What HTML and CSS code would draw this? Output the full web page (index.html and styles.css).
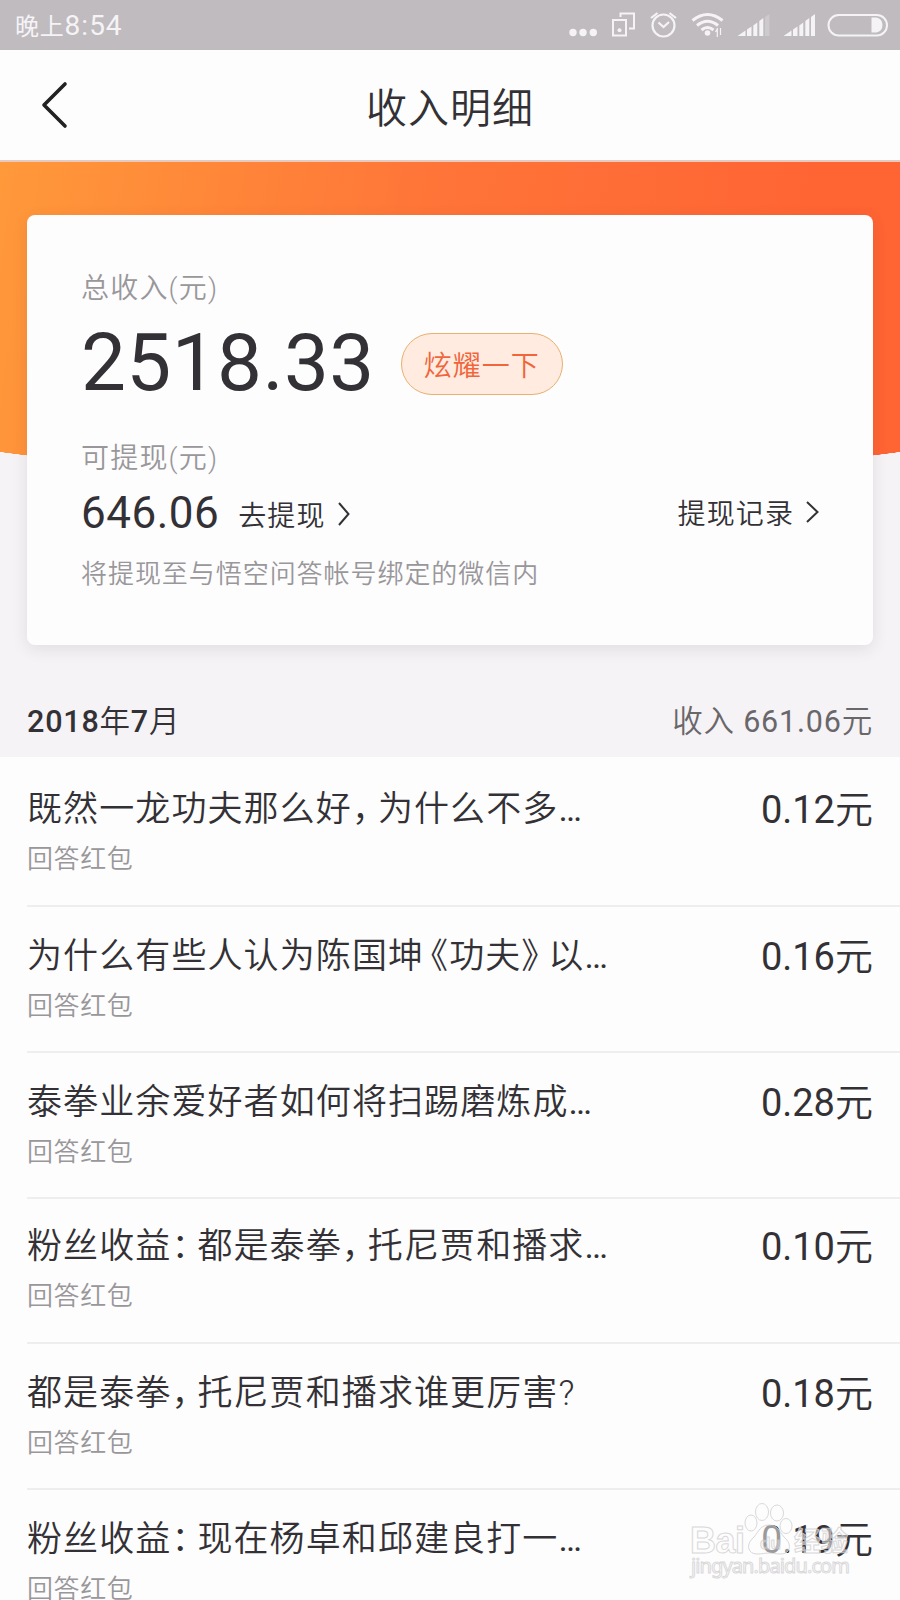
FILE: index.html
```html
<!DOCTYPE html>
<html lang="zh-CN">
<head>
    <meta charset="UTF-8">
    <meta name="viewport" content="width=device-width, initial-scale=1.0">
    <title>收入明细</title>
    <link rel="stylesheet" href="styles.css">
</head>
<body>
    <div class="status-bar">
        <div class="time">晚上<span>8:54</span></div>
        <svg class="status-icons" width="350" height="50" viewBox="0 0 350 50" fill="none" stroke="#f6f3f6">
            <g fill="#f6f3f6" stroke="none">
                <circle cx="23" cy="32.500" r="3.700"/>
                <circle cx="33" cy="32.500" r="3.700"/>
                <circle cx="43.300" cy="32.500" r="3.700"/>
            </g>
            <!-- dual apps -->
            <path d="M63 20h13v15.500H63zM70.500 17v-3.500h13.500v15h-5" stroke-width="2"/>
            <circle cx="69.500" cy="30.300" r="2" fill="#f6f3f6" stroke="none"/>
            <!-- alarm -->
            <circle cx="113.500" cy="25.500" r="11" stroke-width="2.200"/>
            <path d="M108.500 22.500l5 4.500 5.500-5M101 18l6.500-5M126 18l-6.500-5" stroke-width="2.200"/>
            <!-- wifi -->
            <path d="M142.500 20.500q15-12 30 0M147 25.500q10.500-8.500 21 0M151.500 30q6-5 12 0" stroke-width="3"/>
            <circle cx="157.500" cy="33" r="2.800" fill="#f6f3f6" stroke="none"/>
            <path d="M167.300 28v9M165.500 32l2-3.500M170.500 28v7" stroke-width="1.200"/>
            <!-- signal -->
            <g fill="#f6f3f6" stroke="none">
                <path d="M187.500 36l8-5.500V36zM197 29.500l4.500-3V36H197zM203.300 25.500l4-3V36h-4zM209.300 21l4-3v18h-4z"/>
                <path d="M215 17l4.500-3v22H215z" opacity=".25"/>
                <path d="M233.500 36l8-5.500V36zM243 29.500l4.500-3V36H243zM249.300 25.500l4-3V36h-4zM255.300 21l4-3v18h-4zM261 17l4-3v22h-4z"/>
            </g>
            <!-- battery -->
            <rect x="278.500" y="15" width="58.500" height="20.500" rx="10.250" stroke-width="2"/>
            <path d="M321.500 17.500h5a7.700 7.700 0 0 1 0 15h-5z" fill="#f6f3f6" stroke="none"/>
        </svg>
    </div>

    <header class="nav">
        <svg class="back" width="28" height="50" viewBox="0 0 28 50">
            <path d="M25 4L4 25l21 21"/>
        </svg>
        <h1>收入明细</h1>
    </header>

    <section class="summary">
        <div class="card">
            <p class="label">总收入(元)</p>
            <div class="total">
                <span class="total-num">2518.33</span>
                <button class="show-off">炫耀一下</button>
            </div>
            <p class="label">可提现(元)</p>
            <div class="balance">
                <span class="balance-num">646.06</span>
                <a class="link">去提现
                    <svg width="12" height="24" viewBox="0 0 12 24"><path d="M1 1l9.500 11L1 23"/></svg>
                </a>
                <a class="link records">提现记录
                    <svg width="13" height="22" viewBox="0 0 13 22"><path d="M1 1l10.500 10L1 21"/></svg>
                </a>
            </div>
            <p class="note">将提现至与悟空问答帐号绑定的微信内</p>
        </div>
    </section>

    <div class="month">
        <div class="month-name"><b>2018</b>年<b>7</b>月</div>
        <div class="month-sum">收入 <span>661.06</span>元</div>
    </div>

    <ul class="list">
        <li>
            <div class="info">
                <p class="title">既然一龙功夫那么好<i>，</i>为什么不多<em>…</em></p>
                <p class="type">回答红包</p>
            </div>
            <div class="amount"><span>0.12</span>元</div>
        </li>
        <li>
            <div class="info">
                <p class="title">为什么有些人认为陈国坤<i class="open">《</i>功夫<i class="close">》</i>以<em>…</em></p>
                <p class="type">回答红包</p>
            </div>
            <div class="amount"><span>0.16</span>元</div>
        </li>
        <li>
            <div class="info">
                <p class="title">泰拳业余爱好者如何将扫踢磨炼成<em>…</em></p>
                <p class="type">回答红包</p>
            </div>
            <div class="amount"><span>0.28</span>元</div>
        </li>
        <li class="tight">
            <div class="info">
                <p class="title">粉丝收益<i>：</i>都是泰拳<i>，</i>托尼贾和播求<em>…</em></p>
                <p class="type">回答红包</p>
            </div>
            <div class="amount"><span>0.10</span>元</div>
        </li>
        <li>
            <div class="info">
                <p class="title">都是泰拳<i>，</i>托尼贾和播求谁更厉害?</p>
                <p class="type">回答红包</p>
            </div>
            <div class="amount"><span>0.18</span>元</div>
        </li>
        <li>
            <div class="info">
                <p class="title">粉丝收益<i>：</i>现在杨卓和邱建良打一<em>…</em></p>
                <p class="type">回答红包</p>
            </div>
            <div class="amount"><span>0.19</span>元</div>
        </li>
    </ul>

    <svg class="watermark" width="170" height="84" viewBox="0 0 170 84">
        <text class="wm-big" x="1" y="53" textLength="55">Bai</text>
        <g class="paw">
            <ellipse cx="73" cy="12" rx="6.500" ry="8.500"/>
            <ellipse cx="88" cy="13" rx="6.500" ry="8"/>
            <ellipse cx="62" cy="23" rx="6" ry="8"/>
            <ellipse cx="97" cy="26" rx="6" ry="7.500"/>
            <path d="M80 25c-10 0-11 9-17 14-6 6-4 15 5 15 5 0 8-1 12-1s7 1 12 1c9 0 11-9 5-15-6-5-7-14-17-14z"/>
        </g>
        <text class="wm-du" x="71" y="49">du</text>
        <text class="wm-cn" x="105" y="51" textLength="54">经验</text>
        <text class="wm-url" x="2" y="73" textLength="159">jingyan.baidu.com</text>
    </svg>
</body>
</html>
```
FILE: styles.css
```css
* {
    box-sizing: border-box;
    margin: 0;
    padding: 0;
}

body {
    position: relative;
    width: 900px;
    height: 1600px;
    overflow: hidden;
    font-family: Roboto, "Noto Sans CJK SC", sans-serif;
    font-weight: 350;
    background: #fdfdfd;
    color: #333135;
}

svg {
    display: block;
}

.status-bar {
    display: flex;
    justify-content: space-between;
    height: 50px;
    padding-left: 15px;
    background: #bfbbbf;
    color: #f6f3f6;
}

.time {
    font-size: 24px;
    line-height: 52px;
    letter-spacing: 0.8px;
    font-weight: 400;
}

.time span {
    font-size: 28px;
    letter-spacing: 1px;
}

.nav {
    display: flex;
    align-items: center;
    height: 112px;
    padding-left: 40px;
    border-bottom: 2px solid #e6c9bf;
}

.back {
    fill: none;
    stroke: #222;
    stroke-width: 3.6;
    stroke-linecap: round;
    stroke-linejoin: round;
}

.nav h1 {
    flex: 1;
    padding-right: 68px;
    text-align: center;
    font-size: 41px;
    font-weight: 350;
    letter-spacing: 1px;
}

/* orange backdrop with a curved lower edge, the card lies over it */
.summary {
    padding: 53px 27px 0;
    height: 513px;
    background: radial-gradient(ellipse 1100px 330px at 450px -11px, transparent 99.9%, #f5f3f6 100%), linear-gradient(100deg, #ff993a 0%, #ff7438 45%, #ff6433 85%);
}

.card {
    height: 430px;
    padding: 54px 54px 0;
    border-radius: 8px;
    background: #fdfdfe;
    box-shadow: 0 4px 16px rgba(60, 40, 60, 0.1);
}

.label {
    font-size: 28px;
    line-height: 40px;
    letter-spacing: 1.2px;
    color: #99979a;
}

.total {
    display: flex;
    align-items: center;
    height: 110px;
    margin-bottom: 20px;
}

.total-num {
    font-size: 80px;
    font-weight: 400;
    letter-spacing: 0.4px;
    line-height: 110px;
    margin-top: -2px;
}

.show-off {
    width: 162px;
    height: 62px;
    margin: 0 0 0 26px;
    border: 1px solid #e9b06f;
    border-radius: 31px;
    background: #ffebdf;
    color: #f0653c;
    font: inherit;
    font-size: 28px;
    letter-spacing: 1px;
}

.balance {
    display: flex;
    align-items: center;
    height: 68px;
}

.balance-num {
    font-size: 44px;
    font-weight: 400;
    letter-spacing: 0.5px;
}

.link {
    display: flex;
    align-items: center;
    gap: 12px;
    margin: 2px 0 0 19px;
    font-size: 28px;
    letter-spacing: 1.1px;
}

.link svg {
    fill: none;
    stroke: #333135;
    stroke-width: 2;
}

.records {
    margin: -2px 0 0 auto;
}

.note {
    font-size: 26px;
    line-height: 54px;
    letter-spacing: 0.95px;
    color: #99979a;
}

.month {
    display: flex;
    justify-content: space-between;
    height: 82px;
    padding: 25px 27px 0;
    background: #f5f3f6;
    font-size: 30.5px;
    line-height: 44px;
    letter-spacing: 0.8px;
}

.month b {
    font-weight: 500;
}

.month-sum {
    color: #69676a;
}

.month-sum span {
    font-weight: 400;
}

.list {
    list-style: none;
}

.list li {
    display: flex;
    justify-content: space-between;
    height: 145.75px;
    margin-left: 27px;
    padding: 24px 27px 0 0;
    border-bottom: 2px solid #efedf0;
}

.list li:first-child {
    height: 150px;
    padding-top: 27px;
}

.list .tight {
    padding-top: 22px;
}

.title {
    font-size: 35px;
    line-height: 52px;
    letter-spacing: 1.1px;
    white-space: nowrap;
}

.title i {
    font-style: normal;
    letter-spacing: -9px;
}

.title .open {
    margin-left: -11px;
    letter-spacing: 1px;
}

.title .close {
    letter-spacing: -8px;
}

.title em {
    font-style: normal;
    font-family: Roboto, sans-serif;
    font-weight: 400;
    letter-spacing: 0;
}

.type {
    font-size: 26px;
    line-height: 46px;
    letter-spacing: 0.6px;
    color: #99979a;
}

.amount {
    font-size: 38px;
    line-height: 53px;
}

.amount span {
    font-weight: 400;
}

.watermark {
    position: absolute;
    left: 689px;
    top: 1500px;
    opacity: 0.85;
    fill: rgba(255, 255, 255, 0.6);
    stroke: #d4d2d4;
    stroke-width: 1;
}

.wm-big {
    font: 700 36px "Liberation Sans", sans-serif;
}

.wm-du {
    font: 700 17px "Liberation Sans", sans-serif;
}

.wm-cn {
    font: 700 27px "Noto Sans CJK SC", sans-serif;
}

.wm-url {
    font: 400 20px "Noto Sans", sans-serif;
}
```
